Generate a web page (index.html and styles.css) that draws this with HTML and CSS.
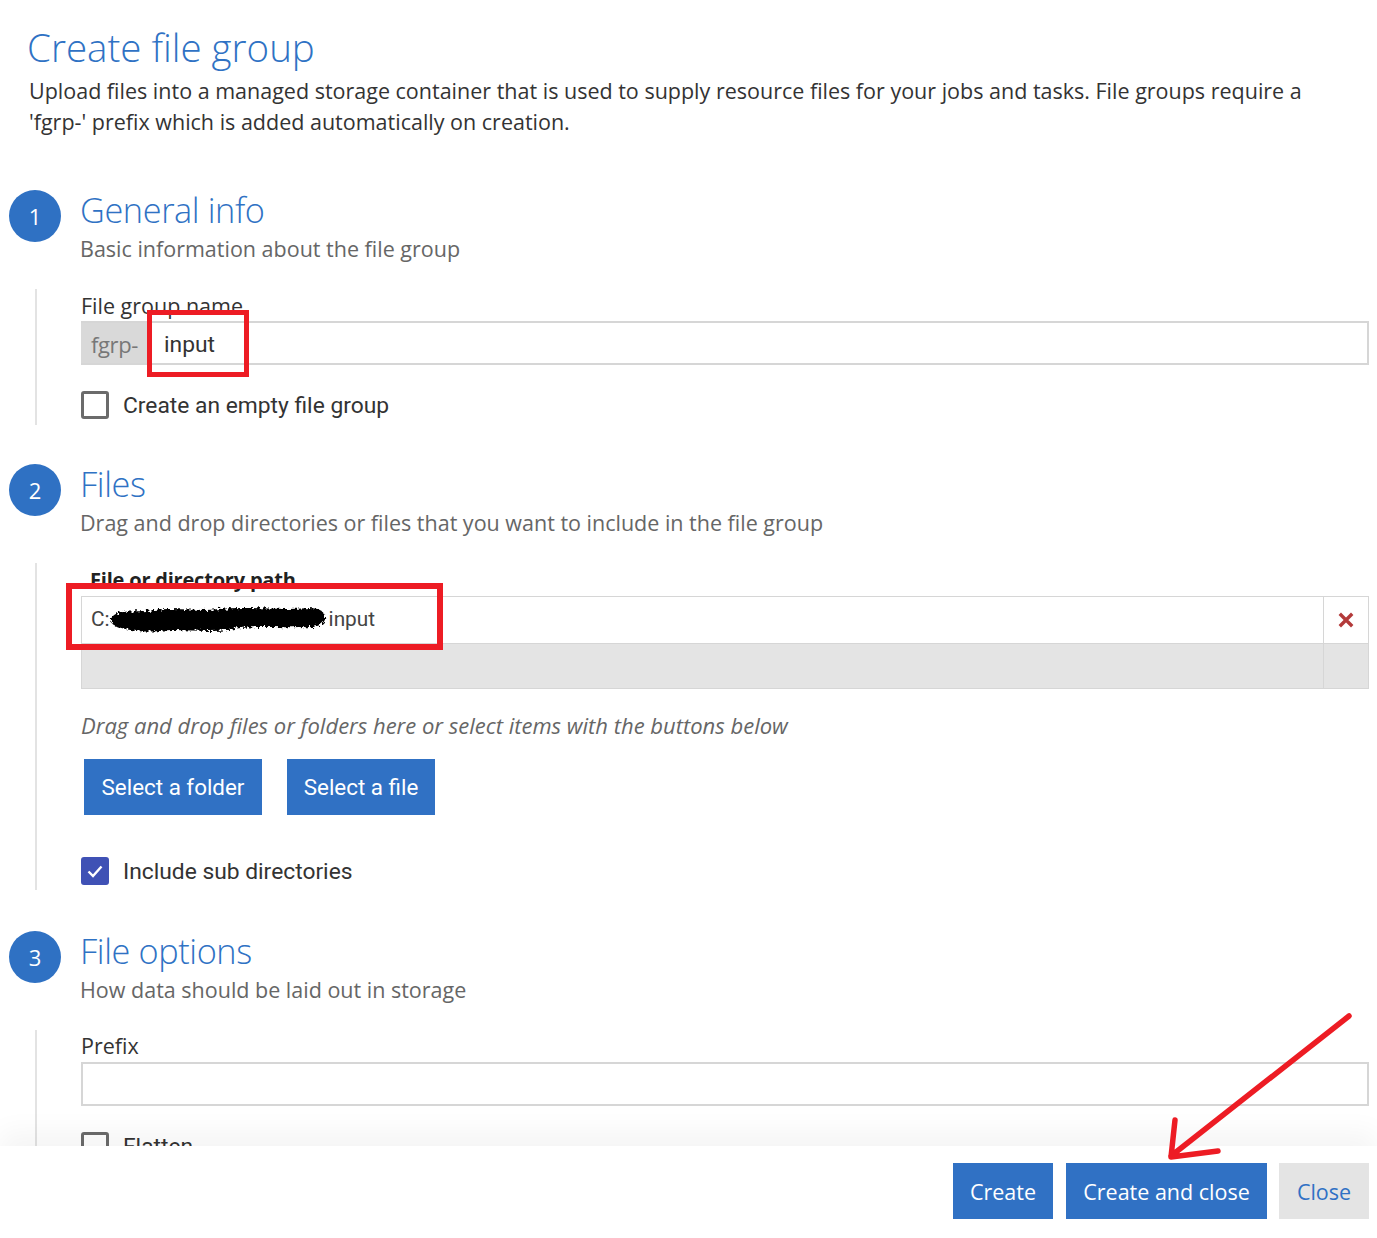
FILE: index.html
```html
<!DOCTYPE html>
<html lang="en">
<head>
<meta charset="utf-8">
<title>Create file group</title>
<link rel="stylesheet" href="styles.css">
</head>
<body>
<div class="page">
  <main class="scroll">
    <header class="header">
      <h1 class="title">Create file group</h1>
      <p class="desc">Upload files into a managed storage container that is used to supply resource files for your jobs and tasks. File groups require a<br>'fgrp-' prefix which is added automatically on creation.</p>
    </header>

    <section class="step step-1">
      <div class="step-head">
        <div class="num">1</div>
        <div class="head-text">
          <h2 class="step-title">General info</h2>
          <p class="step-sub">Basic information about the file group</p>
        </div>
      </div>
      <div class="step-body body-1">
        <label class="field-label">File group name</label>
        <div class="input prefixed">
          <span class="prefix">fgrp-</span>
          <span class="value">input</span>
        </div>
        <div class="check-row">
          <span class="checkbox"></span>
          <span class="check-label">Create an empty file group</span>
        </div>
      </div>
    </section>

    <section class="step step-2">
      <div class="step-head">
        <div class="num">2</div>
        <div class="head-text">
          <h2 class="step-title">Files</h2>
          <p class="step-sub">Drag and drop directories or files that you want to include in the file group</p>
        </div>
      </div>
      <div class="step-body body-2">
        <div class="field-label bold">File or directory path</div>
        <div class="table">
          <div class="row">
            <div class="cell path">C:<svg class="scribble" width="220" height="32" viewBox="0 0 220 32"><defs><filter id="rough" x="-5%" y="-20%" width="110%" height="140%"><feTurbulence type="fractalNoise" baseFrequency="0.35" numOctaves="2" seed="4"/><feDisplacementMap in="SourceGraphic" scale="7"/></filter></defs><path filter="url(#rough)" d="M4 13 C12 6 30 10 45 7 C70 4 90 9 110 6 C140 3 170 8 200 5 C212 5 217 10 216 16 C215 23 205 25 190 24 C165 25 140 22 120 27 C95 30 70 25 50 28 C30 30 12 26 5 22 C1 20 1 16 4 13 Z" fill="#000"/></svg>input</div>
            <div class="cell action"><svg width="16" height="16" viewBox="0 0 16 16"><path d="M3 3 L13 13 M13 3 L3 13" stroke="#b33a3a" stroke-width="3.4" stroke-linecap="square"/></svg></div>
          </div>
          <div class="row empty">
            <div class="cell path"></div>
            <div class="cell action"></div>
          </div>
        </div>
        <p class="hint">Drag and drop files or folders here or select items with the buttons below</p>
        <div class="btn-row">
          <button class="btn btn-select">Select a folder</button>
          <button class="btn btn-select">Select a file</button>
        </div>
        <div class="check-row checked-row">
          <span class="checkbox checked"><svg width="20" height="20" viewBox="0 0 20 20"><path d="M3.5 10.5 L8 15 L16.5 5.5" fill="none" stroke="#fff" stroke-width="2.4"/></svg></span>
          <span class="check-label">Include sub directories</span>
        </div>
      </div>
    </section>

    <section class="step step-3">
      <div class="step-head">
        <div class="num">3</div>
        <div class="head-text">
          <h2 class="step-title">File options</h2>
          <p class="step-sub">How data should be laid out in storage</p>
        </div>
      </div>
      <div class="step-body body-3">
        <label class="field-label">Prefix</label>
        <div class="input"></div>
        <div class="check-row flatten-row">
          <span class="checkbox"></span>
          <span class="check-label">Flatten</span>
        </div>
      </div>
    </section>
  </main>

  <footer class="footer">
    <button class="btn btn-foot btn-create">Create</button>
    <button class="btn btn-foot btn-create-close">Create and close</button>
    <button class="btn btn-foot btn-close">Close</button>
  </footer>

  <div class="mark mark-name"></div>
  <div class="mark mark-path"></div>
  <svg class="arrow" width="1377" height="1238" viewBox="0 0 1377 1238">
    <path d="M1349 1016 L1171 1156 M1171 1157 L1175 1120 M1171 1157 L1218 1151" fill="none" stroke="#ed1c24" stroke-width="5.5" stroke-linecap="round" stroke-linejoin="round"/>
  </svg>
</div>
</body>
</html>
```

FILE: styles.css
```css
* { box-sizing: border-box; }
html, body { margin: 0; padding: 0; background: #fff; }
body { font-family: "Open Sans", "Noto Sans", sans-serif; color: #333; }

.page {
  position: relative;
  width: 1377px;
  height: 1238px;
  display: flex;
  flex-direction: column;
  overflow: hidden;
}

.scroll {
  flex: 1;
  overflow: hidden;
  padding: 0 8px 0 9px;
}

.header { padding: 24px 0 0 18px; }
.title {
  margin: 0;
  font-size: 38.5px;
  line-height: 46px;
  font-weight: 300;
  color: #2f72c4;
}
.desc {
  margin: 5px 0 0 2px;
  font-size: 21.5px;
  line-height: 31px;
  color: #333;
  white-space: nowrap;
}

.step-1 { margin-top: 50px; }
.step-2 { margin-top: 36px; }
.step-3 { margin-top: 38px; }

.step-head {
  display: flex;
  align-items: flex-start;
  gap: 19px;
}
.num {
  width: 52px;
  height: 52px;
  margin-top: 3px;
  border-radius: 50%;
  background: #2f71c3;
  color: #fff;
  font-family: "Open Sans", sans-serif;
  font-size: 22px;
  line-height: 52px;
  text-align: center;
}
.step-title {
  margin: 0;
  font-size: 34.3px;
  line-height: 46px;
  font-weight: 300;
  color: #2f72c4;
  letter-spacing: -0.4px;
}
.step-sub {
  margin: 0;
  font-size: 21.5px;
  line-height: 32px;
  color: #666;
}

.step-body {
  margin: 24px 0 0 26px;
  border-left: 2px solid #e3e3e3;
  padding-left: 44px;
}
.body-1 { padding-bottom: 5px; }
.body-2 { padding-bottom: 4px; }

.field-label {
  display: block;
  font-size: 21.5px;
  line-height: 32px;
  color: #333;
}
.field-label.bold { font-weight: 700; font-size: 20px; line-height: 33px; padding-left: 9px; color: #222; letter-spacing: -0.2px; }
.body-1 .field-label { line-height: 31px; padding-top: 1px; }

.input {
  height: 44px;
  border: 2px solid #d6d6d6;
  display: flex;
  align-items: stretch;
  background: #fff;
}
.input.prefixed { border-left: none; }
.prefix {
  background: #d9d9d9;
  color: #777;
  font-family: "Open Sans", sans-serif;
  font-size: 22px;
  line-height: 42px;
  padding: 0 0 0 10px;
  width: 67px;
  letter-spacing: -0.4px;
}
.value {
  font-family: Roboto, sans-serif;
  font-size: 22.8px;
  line-height: 44px;
  padding-left: 16px;
  color: #333;
}

.check-row {
  display: flex;
  align-items: center;
  gap: 14px;
  height: 30px;
  margin-top: 26px;
}
.body-1 .check-row { margin-top: 25px; }
.checkbox {
  width: 28px;
  height: 28px;
  border: 3px solid #6b6b6b;
  border-radius: 3px;
  display: flex;
  align-items: center;
  justify-content: center;
  flex: none;
}
.checkbox.checked {
  background: #3f51b5;
  border-color: #3f51b5;
}
.check-label {
  font-family: Roboto, sans-serif;
  font-size: 22.8px;
  color: #333;
}
.checked-row { margin-top: 41px; }
.flatten-row { margin-top: 25px; }

.table { border: 1px solid #d6d6d6; }
.row { display: flex; height: 46px; }
.row + .row { border-top: 1px solid #d6d6d6; height: 45px; }
.row.empty { background: #e4e4e4; }
.cell.path {
  flex: 1;
  display: flex;
  align-items: center;
  padding-left: 9px;
  padding-bottom: 3px;
  font-family: Roboto, sans-serif;
  font-size: 20.8px;
  color: #444;
}
.scribble { margin: 0 0 0 -1px; }
.cell.action {
  width: 45px;
  border-left: 1px solid #d6d6d6;
  display: flex;
  align-items: center;
  justify-content: center;
}

.hint {
  margin: 21px 0 0;
  font-size: 22px;
  line-height: 30px;
  font-style: italic;
  color: #666;
}

.btn-row {
  display: flex;
  gap: 25px;
  margin: 19px 0 0 3px;
}
.btn {
  border: none;
  border-radius: 0;
  cursor: pointer;
  background: #3071c4;
  color: #fff;
  height: 56px;
  padding: 0;
}
.btn-select {
  font-family: Roboto, sans-serif;
  font-size: 22.4px;
}
.btn-row .btn:first-child { width: 178px; }
.btn-row .btn:last-child { width: 148px; }

.footer {
  height: 92px;
  flex: none;
  display: flex;
  justify-content: flex-end;
  align-items: flex-start;
  gap: 13px;
  padding: 17px 8px 0 0;
  background: #fff;
  box-shadow: 0 -14px 26px rgba(0, 0, 0, 0.045);
  position: relative;
}
.btn-foot {
  font-family: "Open Sans", sans-serif;
  font-size: 21.5px;
}
.btn-create { width: 100px; }
.btn-create-close { width: 201px; }
.btn-close { width: 90px; background: #e4e4e4; color: #3071c4; margin-left: -1px; }

.mark {
  position: absolute;
  border: 5px solid #ed1c24;
  pointer-events: none;
}
.mark-name { left: 147px; top: 310px; width: 102px; height: 67px; }
.mark-path { left: 66px; top: 583px; width: 377px; height: 67px; border-width: 6px; }

.arrow {
  position: absolute;
  left: 0;
  top: 0;
  pointer-events: none;
}
```
